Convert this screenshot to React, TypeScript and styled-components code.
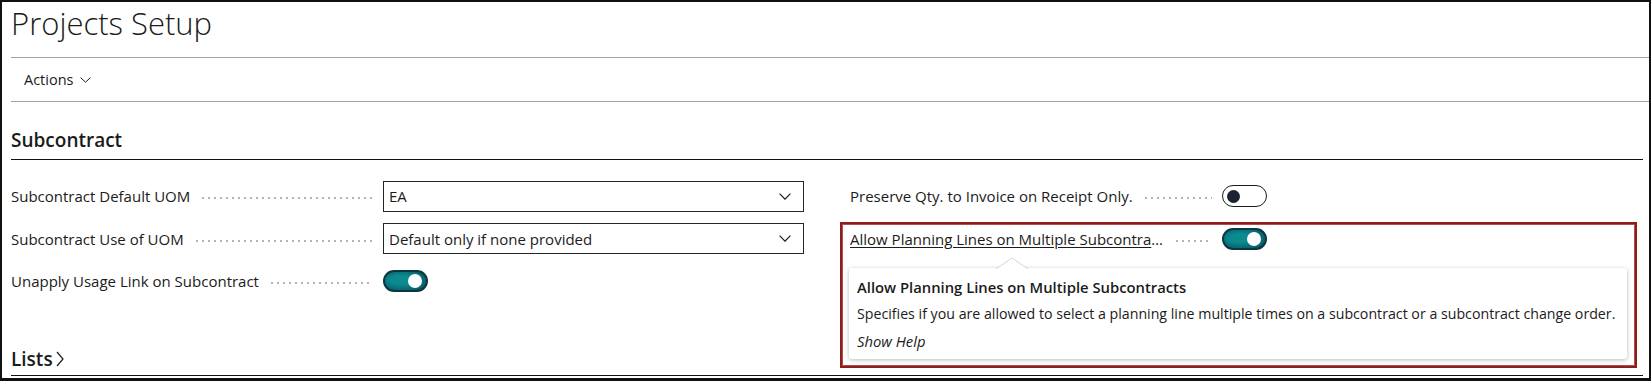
import React from 'react';
import styled, { createGlobalStyle } from 'styled-components';

const GlobalStyle = createGlobalStyle`
  html, body {
    margin: 0;
    padding: 0;
    background: #fff;
  }
  body {
    font-family: "Open Sans", "Noto Sans", sans-serif;
    color: #1b1b1b;
  }
`;

const Frame = styled.div`
  width: 1651px;
  height: 381px;
  box-sizing: border-box;
  border: 2px solid #111;
  border-bottom-width: 3px;
  padding-left: 9px;
  background: #fff;
  overflow: hidden;
  display: flex;
  flex-direction: column;
`;

const TitleBar = styled.header`
  height: 56px;
  flex: 0 0 auto;
  box-sizing: border-box;
  border-bottom: 1px solid #a3a3a3;
`;

const Title = styled.h1`
  margin: 0;
  padding-top: 1px;
  font-size: 31px;
  font-weight: 300;
  line-height: 40px;
`;

const ActionBar = styled.nav`
  height: 44px;
  flex: 0 0 auto;
  box-sizing: border-box;
  border-bottom: 1px solid #a3a3a3;
  display: flex;
  align-items: center;
  padding-left: 13px;
  gap: 7px;
  font-size: 14.5px;
`;

const Section = styled.section`
  padding-right: 6px;
  display: flex;
  flex-direction: column;
  flex: 1 1 auto;
`;

const SectionHeader = styled.h2`
  margin: 0;
  height: 58px;
  box-sizing: border-box;
  border-bottom: 1px solid #111;
  display: flex;
  align-items: flex-end;
  padding-bottom: 7px;
  font-size: 19px;
  font-weight: 600;
  line-height: 24px;
`;

const HeaderTitle = styled.span`
  display: inline-flex;
  align-items: center;
  gap: 3px;
`;

const FieldGrid = styled.div`
  margin-top: 15px;
  display: grid;
  grid-template-columns: 793px 793px;
  column-gap: 46px;
`;

const Column = styled.div`
  display: flex;
  flex-direction: column;
`;

const Field = styled.div`
  position: relative;
  height: 42.5px;
  display: flex;
  align-items: center;
`;

const Label = styled.div`
  flex: 0 0 372px;
  display: flex;
  align-items: center;
  min-width: 0;
  font-size: 15px;
`;

const LabelText = styled.span<{ $link?: boolean }>`
  flex: 0 1 auto;
  white-space: nowrap;
  overflow: hidden;
  text-overflow: ellipsis;
  text-decoration: ${(p) => (p.$link ? 'underline' : 'none')};
  text-underline-offset: 2px;
`;

const Leader = styled.span`
  flex: 1 1 auto;
  min-width: 38px;
  height: 2px;
  margin: 4px 10px 0 10px;
  background-image: radial-gradient(circle, #b4b4b4 0.8px, transparent 1.1px);
  background-size: 6px 2px;
  background-repeat: repeat-x;
  background-position: left center;
`;

const Select = styled.div`
  width: 421px;
  height: 31px;
  box-sizing: border-box;
  border: 1px solid #262626;
  display: flex;
  align-items: center;
  justify-content: space-between;
  padding: 0 12px 0 5px;
  font-size: 15px;
`;

const Toggle = styled.span<{ $on?: boolean }>`
  width: 45px;
  height: 22px;
  box-sizing: border-box;
  border-radius: 11px;
  display: flex;
  align-items: center;
  justify-content: ${(p) => (p.$on ? 'flex-end' : 'flex-start')};
  padding: 0 4px;
  border: ${(p) => (p.$on ? '2px solid #0c3640' : '1px solid #1b1b1b')};
  background: ${(p) => (p.$on ? 'radial-gradient(ellipse at 40% 45%, #0b8a90 30%, #08626c 75%, #0c3a44 100%)' : '#fff')};
`;

const Knob = styled.span<{ $on?: boolean }>`
  width: ${(p) => (p.$on ? '14px' : '13px')};
  height: ${(p) => (p.$on ? '14px' : '13px')};
  border-radius: 50%;
  background: ${(p) => (p.$on ? '#fff' : '#1c2233')};
`;

const Highlight = styled.div`
  position: absolute;
  left: -10px;
  top: 4px;
  width: 797px;
  height: 146px;
  box-sizing: border-box;
  border: 2px solid #8e1c1c;
  box-shadow: inset 0 0 0 1px #b84a4a;
  pointer-events: none;
`;

const Tooltip = styled.div`
  position: absolute;
  left: -1px;
  top: 50px;
  width: 778px;
  height: 91px;
  box-sizing: border-box;
  background: #fff;
  border-radius: 3px;
  box-shadow: 0 1px 4px rgba(0, 0, 0, 0.28);
  padding: 9px 9px 0 8px;
  display: flex;
  flex-direction: column;
  gap: 7px;
  font-size: 14.8px;
  line-height: 20px;
  white-space: nowrap;
`;

const TipArrow = styled.svg`
  position: absolute;
  left: 147px;
  top: -11px;
`;

const TipTitle = styled.div`
  font-weight: 600;
`;

const TipText = styled.div`
  font-size: 14.2px;
`;

const TipLink = styled.div`
  font-style: italic;
`;

const ListsHeader = styled(SectionHeader)`
  margin-top: auto;
  margin-bottom: 2px;
  height: 40px;
  padding-bottom: 4px;
`;

const ChevronDown = ({ w = 12, h = 7, sw = 1.2 }: { w?: number; h?: number; sw?: number }) => (
  <svg width={w} height={h} viewBox={`0 0 ${w} ${h}`} fill="none">
    <polyline points={`0.6,0.6 ${w / 2},${h - 0.8} ${w - 0.6},0.6`} stroke="#1b1b1b" strokeWidth={sw} />
  </svg>
);

const ChevronRight = () => (
  <svg width="8" height="16" viewBox="0 0 8 16" fill="none">
    <polyline points="1,1 7,8 1,15" stroke="#1b1b1b" strokeWidth="1.2" />
  </svg>
);

const App = () => {
  return (
    <>
      <GlobalStyle />
      <Frame>
        <TitleBar>
          <Title>Projects Setup</Title>
        </TitleBar>
        <ActionBar>
          Actions
          <ChevronDown w={11} h={6} sw={1} />
        </ActionBar>
        <Section>
          <SectionHeader>Subcontract</SectionHeader>
          <FieldGrid>
            <Column>
              <Field>
                <Label>
                  <LabelText>Subcontract Default UOM</LabelText>
                  <Leader />
                </Label>
                <Select>
                  EA
                  <ChevronDown />
                </Select>
              </Field>
              <Field>
                <Label>
                  <LabelText>Subcontract Use of UOM</LabelText>
                  <Leader />
                </Label>
                <Select>
                  Default only if none provided
                  <ChevronDown />
                </Select>
              </Field>
              <Field>
                <Label>
                  <LabelText>Unapply Usage Link on Subcontract</LabelText>
                  <Leader />
                </Label>
                <Toggle $on>
                  <Knob $on />
                </Toggle>
              </Field>
            </Column>
            <Column>
              <Field>
                <Label>
                  <LabelText>Preserve Qty. to Invoice on Receipt Only.</LabelText>
                  <Leader />
                </Label>
                <Toggle>
                  <Knob />
                </Toggle>
              </Field>
              <Field>
                <Label>
                  <LabelText $link>Allow Planning Lines on Multiple Subcontracts</LabelText>
                  <Leader />
                </Label>
                <Toggle $on>
                  <Knob $on />
                </Toggle>
                <Tooltip>
                  <TipArrow width="32" height="12" viewBox="0 0 32 12">
                    <polygon points="0,12 16,1 32,12" fill="#fff" />
                    <polyline points="0,12 16,1 32,12" fill="none" stroke="#d6d6d6" strokeWidth="1" />
                  </TipArrow>
                  <TipTitle>Allow Planning Lines on Multiple Subcontracts</TipTitle>
                  <TipText>
                    Specifies if you are allowed to select a planning line multiple times on a subcontract or a subcontract change order.
                  </TipText>
                  <TipLink>Show Help</TipLink>
                </Tooltip>
                <Highlight />
              </Field>
            </Column>
          </FieldGrid>
          <ListsHeader>
            <HeaderTitle>
              Lists
              <ChevronRight />
            </HeaderTitle>
          </ListsHeader>
        </Section>
      </Frame>
    </>
  );
};

export default App;
